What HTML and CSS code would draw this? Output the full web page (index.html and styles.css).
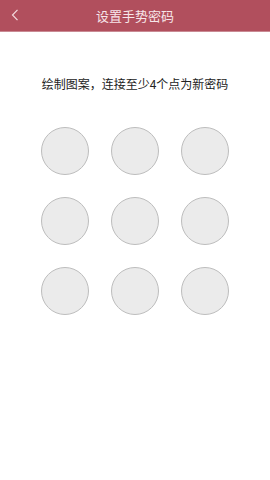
FILE: index.html
```html
<!DOCTYPE html>
<html>
<head>
    <title>设置手势密码</title>
    <link rel="stylesheet" href="styles.css">
</head>
<body>
    <div class="header">
        <button class="back-btn">
            <svg width="8" height="12" viewBox="0 0 8 12">
                <path d="M6.5 0.8 L1.5 6 L6.5 11.2" fill="none" stroke="#f3d9dd" stroke-width="1.2"/>
            </svg>
        </button>
        <h1>设置手势密码</h1>
    </div>

    <p class="hint">绘制图案，连接至少4个点为新密码</p>

    <div class="pattern-grid">
        <div class="dot"></div>
        <div class="dot"></div>
        <div class="dot"></div>
        <div class="dot"></div>
        <div class="dot"></div>
        <div class="dot"></div>
        <div class="dot"></div>
        <div class="dot"></div>
        <div class="dot"></div>
    </div>
</body>
</html>
```

FILE: styles.css
```css
body {
    font-family: "Noto Sans CJK SC", "Liberation Sans", sans-serif;
    margin: 0;
    background: #fff;
}

.header {
    position: relative;
    height: 31px;
    background: #b14f5d;
    border-bottom: 1px solid #c98a93;
    display: flex;
    align-items: center;
    justify-content: center;
}

.header h1 {
    margin: 0;
    font-size: 13px;
    font-weight: normal;
    color: #f7e6e9;
}

.back-btn {
    position: absolute;
    left: 9px;
    top: 9px;
    background: none;
    border: none;
    padding: 0;
    width: 12px;
    height: 12px;
    display: flex;
    align-items: center;
    justify-content: center;
}

.hint {
    margin: 44px 0 0;
    text-align: center;
    font-size: 12px;
    line-height: 16px;
    color: #222;
}

.pattern-grid {
    display: grid;
    grid-template-columns: repeat(3, 48px);
    column-gap: 22px;
    row-gap: 22px;
    justify-content: center;
    margin-top: 35px;
}

.dot {
    width: 46px;
    height: 46px;
    border-radius: 50%;
    background: #ebebeb;
    border: 1px solid #bdbdbd;
}
```
